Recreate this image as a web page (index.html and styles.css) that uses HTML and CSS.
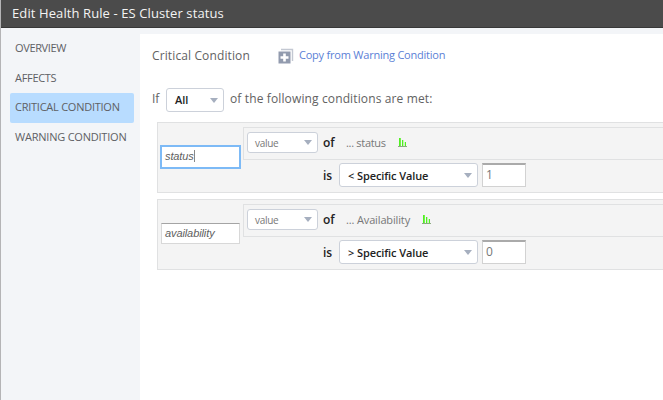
FILE: index.html
```html
<!DOCTYPE html>
<html lang="en">
<head>
<meta charset="utf-8">
<title>Edit Health Rule</title>
<link rel="stylesheet" href="styles.css">
</head>
<body>
<div class="dialog">
  <header class="titlebar"><span>Edit Health Rule - ES Cluster status</span></header>
  <div class="body">
    <nav class="sidebar">
      <a class="tab overview"><span>OVERVIEW</span></a>
      <a class="tab affects"><span>AFFECTS</span></a>
      <a class="tab active"><span>CRITICAL CONDITION</span></a>
      <a class="tab warning"><span>WARNING CONDITION</span></a>
    </nav>
    <main class="panel">
      <div class="heading">
        <span class="heading-text">Critical Condition</span>
        <svg class="copy-icon" width="16" height="16" viewBox="0 0 16 16"><path d="M3 1.5h11.5V13" fill="none" stroke="#c3c8d2" stroke-width="1.4"/><path d="M.5 3.5h12v12H.5z" fill="#929bae"/><path d="M6.5 5.5v8M2.5 9.5h8" stroke="#fff" stroke-width="2.6"/></svg>
        <a class="copy-link">Copy from Warning Condition</a>
      </div>
      <div class="match">
        <span class="if">If</span>
        <div class="select all"><b>All</b><i class="arrow"></i></div>
        <span class="met">of the following conditions are met:</span>
      </div>
      <section class="condition">
        <div class="name focused"><em>status</em><i class="caret"></i></div>
        <div class="rule">
          <div class="metric">
            <div class="select value"><span>value</span><i class="arrow"></i></div>
            <b class="word of">of</b>
            <span class="metric-name status">... status</span>
            <svg class="chart" width="10" height="10" viewBox="0 0 10 10"><path d="M1 0h1.8v8H1zM4 2h1.3v6H4zM6.8 4h1.2v4H6.8z" fill="#50f020"/><path d="M0 8.5h9" stroke="#8caa82" stroke-width="1"/></svg>
          </div>
          <div class="compare">
            <b class="word is">is</b>
            <div class="select operator"><b>&lt; Specific Value</b><i class="arrow"></i></div>
            <div class="number">1</div>
          </div>
        </div>
      </section>
      <section class="condition">
        <div class="name"><em>availability</em></div>
        <div class="rule">
          <div class="metric">
            <div class="select value"><span>value</span><i class="arrow"></i></div>
            <b class="word of">of</b>
            <span class="metric-name availability">... Availability</span>
            <svg class="chart" width="10" height="10" viewBox="0 0 10 10"><path d="M1 0h1.8v8H1zM4 2h1.3v6H4zM6.8 4h1.2v4H6.8z" fill="#50f020"/><path d="M0 8.5h9" stroke="#8caa82" stroke-width="1"/></svg>
          </div>
          <div class="compare">
            <b class="word is">is</b>
            <div class="select operator"><b>&gt; Specific Value</b><i class="arrow"></i></div>
            <div class="number">0</div>
          </div>
        </div>
      </section>
    </main>
  </div>
</div>
</body>
</html>
```
FILE: styles.css
```css
* { box-sizing: border-box; }
body { margin: 0; overflow: hidden; background: #fff; font-family: "Open Sans", sans-serif; font-size: 12px; color: #626262; }
b { font-weight: 600; }
span, b, em, a { white-space: nowrap; }
.dialog { width: 663px; height: 400px; border-left: 1px solid #b4b4b6; display: flex; flex-direction: column; }
.titlebar { height: 28px; flex: none; background: #4b4b4b; border-bottom: 1px solid #383838; color: #f4f4f4; font-size: 13px; line-height: 27px; padding-left: 11px; letter-spacing: .1px; }
.body { flex: 1; display: flex; background: #f3f5f8; }
.sidebar { width: 139px; flex: none; padding: 6px 6px 0 9px; }
.tab { display: block; height: 29.5px; line-height: 28px; padding-left: 5px; color: #5e6064; font-size: 11px; letter-spacing: -.25px; border-radius: 2px; }
.overview { letter-spacing: -.35px; }
.affects { letter-spacing: -.3px; }
.active { background: #b8dcff; }
.warning { line-height: 27px; letter-spacing: -.22px; }
.panel { flex: 1; min-width: 0; margin-top: 6px; background: #fff; padding-left: 12px; }
.heading { height: 42px; display: flex; align-items: center; }
.heading-text { width: 126px; font-size: 12px; letter-spacing: .12px; }
.copy-icon { margin: 1px 5px 0 0; }
.copy-link { font-size: 11px; letter-spacing: -.22px; color: #5b7fd6; padding-bottom: 2px; }
.match { height: 46px; padding-top: 12px; display: flex; align-items: flex-start; line-height: 22px; }
.if { width: 14px; }
.select { background: #fff; border: 1px solid #ccd1da; border-radius: 3px; display: flex; align-items: center; justify-content: space-between; padding: 0 5px 0 7px; flex: none; }
.arrow { border-left: 4px solid transparent; border-right: 4px solid transparent; border-top: 5px solid #a6afbf; }
.all { width: 58px; height: 24px; color: #222; font-size: 11px; padding-left: 8px; }
.met { margin-left: 6px; letter-spacing: .13px; }
.condition { height: 71px; margin: 0 0 6px 5px; border: 1px solid #e0e1e2; border-right: 0; background: #f4f4f4; display: flex; align-items: flex-start; }
.name { width: 79px; height: 21px; margin: 23px 3px 0 3px; padding: 0 0 2px 3px; border: 1px solid #d8d8d8; border-top-color: #a4a4a4; background: #fff; display: flex; align-items: center; font: 11px "Liberation Sans", sans-serif; letter-spacing: -.1px; color: #606060; flex: none; }
.focused { width: 81px; height: 24px; margin: 22px 2px 0; padding-bottom: 2px; border: 2px solid #7dbaf6; }
.caret { width: 1px; height: 12px; background: #888; }
.rule { flex: 1; min-width: 0; padding-top: 4px; }
.metric { height: 33px; border: 1px solid #e0e1e2; border-right: 0; display: flex; align-items: center; padding: 0 0 2px 3px; }
.value { width: 71px; height: 21px; font-size: 10px; letter-spacing: -.3px; color: #777; }
.word { color: #222; font-size: 12px; }
.of { width: 23px; margin-left: 5px; }
.metric-name { font-size: 11px; letter-spacing: -.14px; color: #777; }
.status { letter-spacing: -.3px; }
.chart { margin-left: 12px; }
.compare { height: 32px; display: flex; align-items: center; padding: 0 0 2px 80px; }
.is { width: 16px; }
.operator { width: 139px; height: 24px; color: #222; font-size: 11px; letter-spacing: -.1px; padding-left: 8px; }
.number { width: 44px; height: 24px; margin-left: 4px; border: 1px solid #d2d2d2; border-top: 2px solid #aaa; background: #fff; line-height: 20px; padding-left: 3px; font-size: 12px; color: #777; }
```
